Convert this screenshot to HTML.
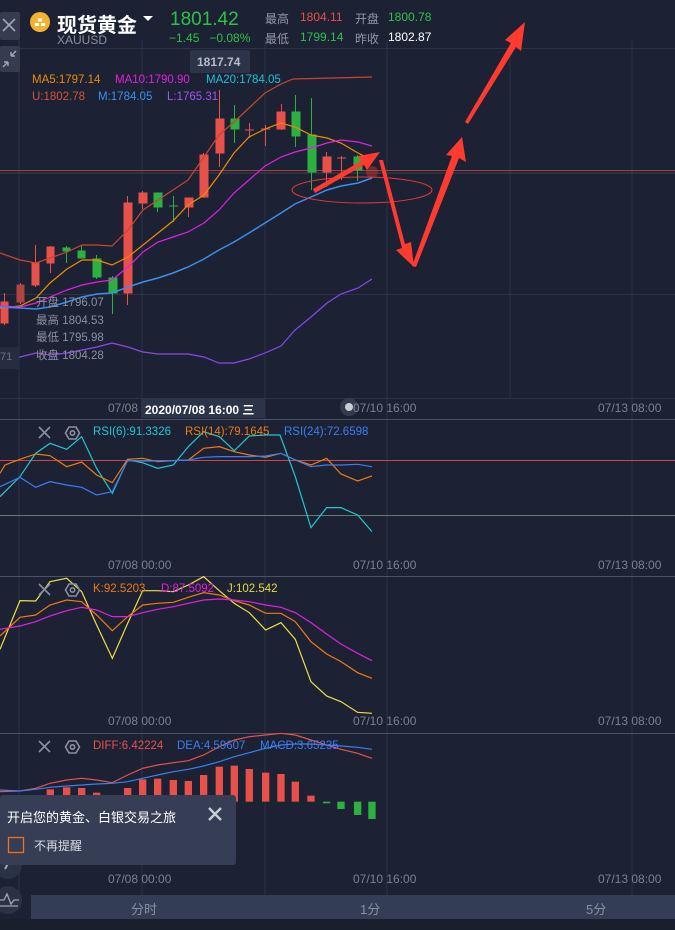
<!DOCTYPE html>
<html><head><meta charset="utf-8"><style>
*{margin:0;padding:0;box-sizing:border-box}
body{width:675px;height:930px;background:#1c2234;overflow:hidden;position:relative;font-family:"Liberation Sans","Noto Sans CJK SC",sans-serif}
.t{position:absolute;white-space:nowrap}
svg{position:absolute;left:0;top:0}
</style></head><body>
<svg width="675" height="930" viewBox="0 0 675 930">
<g stroke="#2c3347" stroke-width="1" fill="none">
<line x1="19" y1="40" x2="19" y2="895"/><line x1="142" y1="40" x2="142" y2="895"/><line x1="265" y1="40" x2="265" y2="895"/><line x1="387" y1="40" x2="387" y2="895"/><line x1="510" y1="40" x2="510" y2="398"/><line x1="632" y1="40" x2="632" y2="895"/>
<line x1="0" y1="48.5" x2="675" y2="48.5"/><line x1="0" y1="294.5" x2="675" y2="294.5"/><line x1="0" y1="398.5" x2="675" y2="398.5"/>
</g>
<g stroke="#4a5266"><line x1="0" y1="419.5" x2="675" y2="419.5"/><line x1="0" y1="576.5" x2="675" y2="576.5"/><line x1="0" y1="733.5" x2="675" y2="733.5"/></g>
<line x1="0" y1="170.5" x2="675" y2="170.5" stroke="#a8403a"/>
<line x1="0" y1="173" x2="675" y2="173" stroke="#3a3f52"/>
<g stroke-width="1">
<g fill="#e8504a" stroke="#e8504a">
<line x1="4.5" y1="293" x2="4.5" y2="325"/><rect x="1" y="302" width="7" height="21"/>
<line x1="20.5" y1="283" x2="20.5" y2="304"/><rect x="17" y="285" width="7" height="17" fill="#b0443e" stroke="#b0443e"/>
<line x1="35.5" y1="245" x2="35.5" y2="287"/><rect x="32" y="263" width="7" height="22"/>
<line x1="50.5" y1="246" x2="50.5" y2="273"/><rect x="47" y="247" width="7" height="16"/>
<line x1="127.5" y1="196" x2="127.5" y2="305"/><rect x="124" y="203" width="8" height="90"/>
<line x1="142.5" y1="191" x2="142.5" y2="209"/><rect x="139" y="193" width="8" height="10"/>
<line x1="188.5" y1="198" x2="188.5" y2="217"/><rect x="185" y="198" width="8" height="9"/>
<line x1="203.5" y1="153" x2="203.5" y2="198"/><rect x="200" y="155" width="8" height="42"/>
<line x1="219.5" y1="90" x2="219.5" y2="167"/><rect x="216" y="119" width="8" height="34"/>
<line x1="249.5" y1="123" x2="249.5" y2="138"/><line x1="245" y1="130" x2="254" y2="130"/>
<line x1="265.5" y1="125" x2="265.5" y2="146"/><line x1="261" y1="129" x2="270" y2="129"/>
<line x1="281.5" y1="104" x2="281.5" y2="130"/><rect x="277" y="112" width="8" height="17"/>
<line x1="326.5" y1="152" x2="326.5" y2="187"/><rect x="323" y="157" width="8" height="15"/>
<line x1="341.5" y1="156" x2="341.5" y2="180"/><line x1="337" y1="158" x2="346" y2="158"/>
</g>
<g fill="#2db040" stroke="#2db040">
<line x1="66.5" y1="246" x2="66.5" y2="263"/><rect x="63" y="248" width="7" height="3"/>
<line x1="81.5" y1="245" x2="81.5" y2="258"/><rect x="78" y="251" width="7" height="7"/>
<line x1="96.5" y1="255" x2="96.5" y2="279"/><rect x="93" y="259" width="8" height="18"/>
<line x1="112.5" y1="276" x2="112.5" y2="314"/><rect x="109" y="278" width="8" height="15"/>
<line x1="157.5" y1="193" x2="157.5" y2="212"/><rect x="154" y="193" width="8" height="14"/>
<line x1="173.5" y1="196" x2="173.5" y2="222"/><line x1="169" y1="206" x2="178" y2="206"/>
<line x1="234.5" y1="105" x2="234.5" y2="143"/><rect x="231" y="119" width="8" height="10"/>
<line x1="295.5" y1="95" x2="295.5" y2="147"/><rect x="292" y="112" width="8" height="24"/>
<line x1="311.5" y1="98" x2="311.5" y2="190"/><rect x="308" y="135" width="8" height="37"/>
<line x1="357.5" y1="155" x2="357.5" y2="181"/><rect x="354" y="157" width="8" height="13"/>
</g>
</g>
<g fill="none" stroke-width="1.2">
<polyline stroke="#c8452f" points="0,253 20,260 36,263 50,258 67,252 82,245 97,245 112,246 128,230 143,210 158,200 173,190 188,180 204,157 219,135 234,122 249,108 265,93 281,84 293,79 372,77"/>
<polyline stroke="#f08a00" points="0,308 20,306 36,298 50,283 67,269 82,260 97,260 112,265 128,257 143,245 158,233 173,221 188,205 204,195 219,175 234,153 249,137 265,129 281,123 295,127 311,135 327,138 341,143 358,153 372,160"/>
<polyline stroke="#e020e0" points="0,306 20,307 36,303 50,297 67,290 82,285 97,282 112,280 128,267 143,252 158,242 173,237 188,232 204,223 219,210 234,193 249,180 265,166 281,157 295,152 311,148 327,143 341,140 358,142 372,146"/>
<polyline stroke="#3a8ef0" stroke-width="1.5" points="0,307 20,308 36,309 50,307 67,302 82,297 97,294 112,293 128,287 143,282 158,278 173,273 188,267 204,259 219,250 234,242 249,233 265,223 281,213 295,204 311,197 327,190 341,186 358,183 372,178"/>
<polyline stroke="#8a48e8" points="0,358 20,357 36,353 50,355 67,353 82,350 97,347 112,343 128,347 143,352 158,354 173,354 188,354 204,357 219,363 234,363 249,359 265,353 281,346 295,330 311,317 327,303 341,294 358,288 372,279"/>
</g>
<ellipse cx="362" cy="190" rx="70" ry="13" fill="none" stroke="#e83a36" stroke-width="1"/>
<g fill="#ff3b30">
<polygon points="313,189 361,161 358,156 380,152 367,170 364,165 315,193"/>
<polygon points="379,160 383,160 405,244 411,242 414,267 396,250 402,248"/>
<polygon points="412,266 452,156 446,155 462,137 466,162 459,158 416,267"/>
<polygon points="465,122 511,43 505,40 525,22 521,51 516,47 468,124"/>
</g>
<circle cx="372" cy="172" r="6" fill="#ff3b30" opacity=".35"/>
<line x1="0" y1="460.5" x2="675" y2="460.5" stroke="#c84848"/>
<line x1="0" y1="515.5" x2="675" y2="515.5" stroke="#6a7a6a"/>
<g fill="none" stroke-width="1.2" transform="translate(0,380) scale(0.3333)">
<polyline stroke="#20c8d0" stroke-width="3.6" points="0,350 60,290 107,220 150,190 200,208 245,170 290,265 337,340 383,240 428,248 473,265 520,255 565,200 611,155 658,170 703,212 748,168 797,165 840,165 886,290 933,443 980,383 1023,383 1073,405 1116,455"/>
<polyline stroke="#f07a10" stroke-width="3.6" points="0,280 15,255 60,238 107,222 150,227 200,260 245,246 290,285 337,308 383,238 428,235 473,245 520,242 565,240 611,205 658,200 703,215 748,225 797,232 843,220 886,240 933,255 980,235 1023,282 1073,303 1116,288"/>
<polyline stroke="#3a7ef0" stroke-width="3.6" points="0,320 60,292 107,322 150,305 200,315 245,322 290,345 337,335 383,242 428,243 473,243 520,242 565,240 611,232 658,230 703,230 748,230 797,228 843,220 886,240 933,260 980,255 1023,255 1073,253 1116,260"/>
</g>
<g fill="none" transform="translate(0,570) scale(0.3333)">
<polyline stroke="#f0e040" stroke-width="3.6" points="0,238 60,92 107,93 150,35 200,25 245,65 290,165 337,265 383,160 428,62 473,62 520,65 565,45 611,20 658,62 703,100 748,128 797,180 843,158 886,208 933,335 980,378 1023,395 1073,427 1116,430"/>
<polyline stroke="#f07a10" stroke-width="3.6" points="0,198 60,142 107,135 150,105 200,90 245,95 290,135 337,182 383,140 428,105 473,100 520,97 565,82 611,68 658,75 703,92 748,105 797,130 843,130 886,155 933,215 980,252 1023,275 1073,308 1116,325"/>
<polyline stroke="#e020e0" stroke-width="3.6" points="0,178 60,168 107,155 150,138 200,122 245,112 290,120 337,140 383,140 428,128 473,118 520,110 565,100 611,90 658,87 703,90 748,95 797,105 843,112 886,128 933,158 980,192 1023,222 1073,250 1116,272"/>
</g>
<g transform="translate(0,730) scale(0.3333)">
<g fill="#e8504a">
<rect x="140" y="178" width="22" height="37"/><rect x="189" y="172" width="22" height="43"/><rect x="234" y="174" width="22" height="41"/><rect x="279" y="188" width="22" height="27"/><rect x="326" y="200" width="22" height="15"/><rect x="372" y="174" width="22" height="41"/><rect x="417" y="148" width="22" height="67"/><rect x="462" y="146" width="22" height="69"/><rect x="509" y="150" width="22" height="65"/><rect x="554" y="153" width="22" height="62"/><rect x="600" y="135" width="22" height="80"/><rect x="647" y="110" width="22" height="105"/><rect x="692" y="107" width="22" height="108"/><rect x="737" y="117" width="22" height="98"/><rect x="786" y="128" width="22" height="87"/><rect x="832" y="132" width="22" height="83"/><rect x="875" y="155" width="22" height="60"/><rect x="922" y="197" width="22" height="18"/>
</g>
<g fill="#2db040"><rect x="969" y="215" width="22" height="5"/><rect x="1012" y="215" width="22" height="22"/><rect x="1062" y="215" width="22" height="40"/><rect x="1105" y="215" width="22" height="52"/></g>
<polyline fill="none" stroke="#e8504a" stroke-width="3.6" points="0,185 60,183 107,175 150,160 200,150 245,145 290,150 337,158 383,135 428,115 473,105 520,98 565,92 611,75 658,50 703,30 748,20 797,15 843,10 886,15 933,30 980,45 1023,58 1073,70 1116,85"/>
<polyline fill="none" stroke="#3a7ef0" stroke-width="3.6" points="0,180 60,183 107,178 150,172 200,168 245,165 290,162 337,160 383,155 428,145 473,135 520,125 565,118 611,108 658,95 703,80 748,68 797,55 843,45 886,42 933,42 980,45 1023,48 1073,52 1116,58"/>
</g>
<g stroke="#8a90a0" stroke-width="1.6" fill="none">
<path d="M39 427l11 11M50 427l-11 11"/><path d="M39 584l11 11M50 584l-11 11"/><path d="M39 741l11 11M50 741l-11 11"/>
<polygon points="69,427 76,427 79.5,433 76,439 69,439 65.5,433"/><circle cx="72.5" cy="433" r="2.2"/>
<polygon points="69,584 76,584 79.5,590 76,596 69,596 65.5,590"/><circle cx="72.5" cy="590" r="2.2"/>
<polygon points="69,741 76,741 79.5,747 76,753 69,753 65.5,747"/><circle cx="72.5" cy="747" r="2.2"/>
</g>
<rect x="0" y="12" width="20" height="28" rx="2" fill="#353c50"/>
<path d="M3 19l12 12M15 19l-12 12" stroke="#a0a6b4" stroke-width="1.6"/>
<rect x="0" y="46" width="20" height="26" rx="2" fill="#353c50"/>
<path d="M3 67l5-5M8 62v4M8 62h-4M16 51l-5 5M11 56v-4M11 56h4" stroke="#a0a6b4" stroke-width="1.4" fill="none"/>
<rect x="0" y="347" width="19" height="22" fill="#262d40"/>
<circle cx="8" cy="865" r="14" fill="#2b3245"/>
<path d="M10 860l-5 9" stroke="#a0a6b4" stroke-width="2"/>
<circle cx="8" cy="900" r="14" fill="#2b3245"/>
<path d="M0 900h4l3-6 4 10 3-4h5M0 906h18" stroke="#a0a6b4" stroke-width="1.3" fill="none"/>
<circle cx="40" cy="22" r="10" fill="#f0b430"/>
<g fill="#fff"><rect x="35" y="23" width="4" height="3"/><rect x="41" y="23" width="4" height="3"/><rect x="38" y="18.5" width="4" height="3"/></g>
<polygon points="143,16 153,16 148,21" fill="#fff"/>
<rect x="190" y="50" width="60" height="23" rx="2" fill="#2b3448"/>
<rect x="141" y="399" width="124" height="19" fill="#2b3448"/>
<circle cx="349" cy="407" r="9" fill="#333a4c"/><circle cx="349" cy="407" r="4" fill="#c8ccd4"/>
<rect x="31" y="895" width="644" height="24" fill="#333d55"/>
<rect x="0" y="919" width="675" height="11" fill="#1a1f2e"/>
<rect x="0" y="795" width="236" height="70" rx="3" fill="#353e55"/>
<path d="M209 808l12 12M221 808l-12 12" stroke="#c8ccd4" stroke-width="2.4"/>
<rect x="8.5" y="837.5" width="15" height="15" fill="none" stroke="#f07020" stroke-width="1.3"/>
</svg>

<div class="t" style="left:57px;top:9px;font-size:20px;color:#fff;font-weight:bold">现货黄金</div>
<div class="t" style="left:57px;top:33px;font-size:12px;color:#8a90a0">XAUUSD</div>
<div class="t" style="left:170px;top:9px;font-size:19px;color:#2fc04a">1801.42</div>
<div class="t" style="left:169px;top:31px;font-size:12px;color:#2fc04a">−1.45&nbsp;&nbsp;&nbsp;−0.08%</div>
<div class="t" style="left:265px;top:10px;font-size:12px;color:#9098a8">最高</div>
<div class="t" style="left:300px;top:10px;font-size:12px;color:#e8504a">1804.11</div>
<div class="t" style="left:355px;top:10px;font-size:12px;color:#9098a8">开盘</div>
<div class="t" style="left:388px;top:10px;font-size:12px;color:#2fc04a">1800.78</div>
<div class="t" style="left:265px;top:30px;font-size:12px;color:#9098a8">最低</div>
<div class="t" style="left:300px;top:30px;font-size:12px;color:#2fc04a">1799.14</div>
<div class="t" style="left:355px;top:30px;font-size:12px;color:#9098a8">昨收</div>
<div class="t" style="left:388px;top:30px;font-size:12px;color:#fff">1802.87</div>
<div class="t" style="left:197px;top:55px;font-size:12px;color:#b8bcc8;font-weight:bold">1817.74</div>
<div class="t" style="left:32px;top:74px;font-size:11.5px;color:#f08a00">MA5:1797.14</div>
<div class="t" style="left:115px;top:74px;font-size:11.5px;color:#e020e0">MA10:1790.90</div>
<div class="t" style="left:206px;top:74px;font-size:11.5px;color:#20c0d0">MA20:1784.05</div>
<div class="t" style="left:32px;top:91px;font-size:11.5px;color:#d8503a">U:1802.78</div>
<div class="t" style="left:98px;top:91px;font-size:11.5px;color:#3a8ef0">M:1784.05</div>
<div class="t" style="left:167px;top:91px;font-size:11.5px;color:#9a58f0">L:1765.31</div>
<div class="t" style="left:36px;top:295px;font-size:11.5px;color:#8a90a0;line-height:17.5px">开盘 1796.07<br>最高 1804.53<br>最低 1795.98<br>收盘 1804.28</div>
<div class="t" style="left:0px;top:351px;font-size:11px;color:#6a7080">71</div>
<div class="t" style="left:108px;top:401px;font-size:12px;color:#7a8090">07/08</div>
<div class="t" style="left:145px;top:401px;font-size:12px;color:#fff;font-weight:bold">2020/07/08 16:00 三</div>
<div class="t" style="left:353px;top:401px;font-size:12px;color:#7a8090">07/10 16:00</div>
<div class="t" style="left:598px;top:401px;font-size:12px;color:#7a8090">07/13 08:00</div>
<div class="t" style="left:93px;top:426px;font-size:11.5px;color:#20c8d0">RSI(6):91.3326</div>
<div class="t" style="left:185px;top:426px;font-size:11.5px;color:#f07a10">RSI(14):79.1645</div>
<div class="t" style="left:284px;top:426px;font-size:11.5px;color:#3a7ef0">RSI(24):72.6598</div>
<div class="t" style="left:108px;top:558px;font-size:12px;color:#7a8090">07/08 00:00</div>
<div class="t" style="left:353px;top:558px;font-size:12px;color:#7a8090">07/10 16:00</div>
<div class="t" style="left:598px;top:558px;font-size:12px;color:#7a8090">07/13 08:00</div>
<div class="t" style="left:93px;top:583px;font-size:11.5px;color:#f07a10">K:92.5203</div>
<div class="t" style="left:161px;top:583px;font-size:11.5px;color:#e020e0">D:87.5092</div>
<div class="t" style="left:227px;top:583px;font-size:11.5px;color:#e8d840">J:102.542</div>
<div class="t" style="left:108px;top:714px;font-size:12px;color:#7a8090">07/08 00:00</div>
<div class="t" style="left:353px;top:714px;font-size:12px;color:#7a8090">07/10 16:00</div>
<div class="t" style="left:598px;top:714px;font-size:12px;color:#7a8090">07/13 08:00</div>
<div class="t" style="left:93px;top:740px;font-size:11.5px;color:#e8504a">DIFF:6.42224</div>
<div class="t" style="left:177px;top:740px;font-size:11.5px;color:#3a7ef0">DEA:4.59607</div>
<div class="t" style="left:260px;top:740px;font-size:11.5px;color:#3a7ef0">MACD:3.65235</div>
<div class="t" style="left:108px;top:872px;font-size:12px;color:#7a8090">07/08 00:00</div>
<div class="t" style="left:353px;top:872px;font-size:12px;color:#7a8090">07/10 16:00</div>
<div class="t" style="left:598px;top:872px;font-size:12px;color:#7a8090">07/13 08:00</div>
<div class="t" style="left:131px;top:899px;font-size:13px;color:#8a90a0">分时</div>
<div class="t" style="left:360px;top:899px;font-size:13px;color:#8a90a0">1分</div>
<div class="t" style="left:586px;top:899px;font-size:13px;color:#8a90a0">5分</div>
<div class="t" style="left:7px;top:807px;font-size:13px;color:#fff">开启您的黄金、白银交易之旅</div>
<div class="t" style="left:34px;top:837px;font-size:12px;color:#d8dce4">不再提醒</div>
</body></html>
